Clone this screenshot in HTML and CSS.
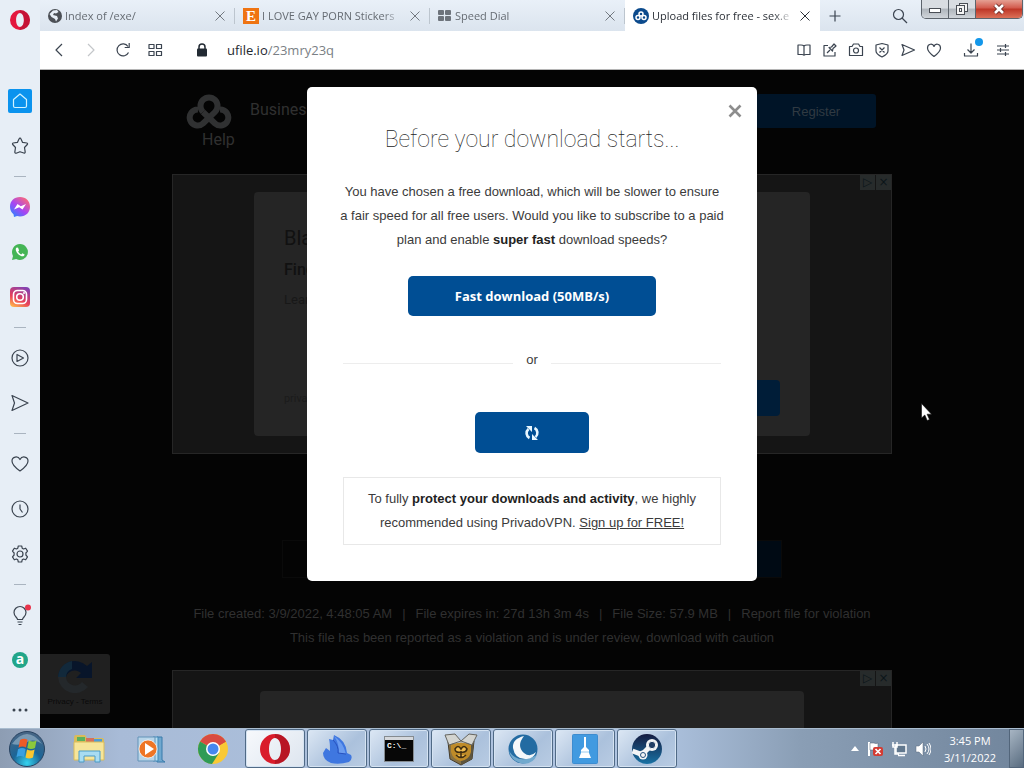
FILE: index.html
```html
<!DOCTYPE html>
<html lang="en">
<head>
    <meta charset="utf-8">
    <title>Upload files for free - sex.exe</title>
    <link rel="stylesheet" href="styles.css">
</head>
<body>
    <div class="browser">
        <nav class="sidebar">
            <button class="opera-menu" aria-label="Menu">
                <svg width="20" height="20" viewBox="0 0 20 20"><path fill="#e3173e" fill-rule="evenodd" d="M10 0a10 10 0 1 0 0 20a10 10 0 0 0 0-20zM10 3c2.300 0 3.900 3 3.900 7s-1.600 7-3.900 7s-3.900-3-3.900-7s1.600-7 3.900-7z"/><path fill="#a70e2c" fill-rule="evenodd" d="M10 0a10 10 0 0 1 0 20v-3c2.300 0 3.900-3 3.900-7s-1.600-7-3.900-7z" opacity=".5"/></svg>
            </button>
            <button class="side-item" aria-label="Start page"><span class="home"><svg class="line" width="18" height="18" viewBox="0 0 18 18"><path d="M2.500 7.500 9 2l6.500 5.500V14q0 1.500-1.500 1.500H4q-1.500 0-1.500-1.500z"/></svg></span></button>
            <button class="side-item" aria-label="Bookmarks"><svg class="line" width="18" height="18" viewBox="0 0 18 18"><path d="M9 1.200q.8 0 1 .7l1.600 3.500 4.300.6q1.100.4.400 1.500l-2.800 3 .7 4.600q-.2 1.300-1.400.9L9 14.700l-3.800 1.500q-1.200.2-1.400-1.100l.7-4.600-2.800-3Q1.100 6.400 2.100 6l4.300-.6L8 1.900q.3-.7 1-.7z"/></svg></button>
            <span class="side-sep"></span>
            <button class="side-item" aria-label="Messenger">
                <svg width="20" height="20" viewBox="0 0 20 20"><defs><linearGradient id="ms" x1="0" y1="1" x2=".8" y2="0"><stop offset="0" stop-color="#1590ff"/><stop offset=".5" stop-color="#a545f5"/><stop offset="1" stop-color="#ff6b72"/></linearGradient></defs><path fill="url(#ms)" d="M10 0c6 0 10 4.200 10 9.700s-4 9.700-10 9.700c-1 0-2-.1-2.900-.4L4 20l-.5-2.800C1.300 15.400 0 12.800 0 9.700 0 4.200 4 0 10 0z"/><path fill="#fff" d="M4 12.500 7.500 7l3.300 2.300L16 7l-3.500 5.500-3.300-2.300z"/></svg>
            </button>
            <button class="side-item" aria-label="WhatsApp">
                <svg width="18" height="18" viewBox="0 0 18 18"><path fill="#45b556" d="M9 1a8 8 0 1 1-3.800 15.100L1 17l1-4.100A8 8 0 0 1 9 1z"/><path fill="#fff" d="M6 4.500c-1.300.6-1.500 2-.9 3.500 1 2.500 3 4.500 5.500 5.200 1.500.4 2.900-.2 3-1.700l-2.200-1.200-1.100 1.200c-1.500-.6-2.500-1.600-3.100-3l.9-1.100-1-2.600z"/></svg>
            </button>
            <button class="side-item" aria-label="Instagram">
                <svg width="20" height="20" viewBox="0 0 20 20"><defs><linearGradient id="ig" x1=".2" y1="1" x2=".7" y2="0"><stop offset="0" stop-color="#ffb24c"/><stop offset=".4" stop-color="#e8405a"/><stop offset="1" stop-color="#8441b0"/></linearGradient></defs><rect width="20" height="20" rx="4" fill="url(#ig)"/><g fill="none" stroke="#fff" stroke-width="1.600"><rect x="3.500" y="3.500" width="13" height="13" rx="4"/><circle cx="10" cy="10" r="3.300"/></g><circle cx="14" cy="6" r="1" fill="#fff"/></svg>
            </button>
            <span class="side-sep"></span>
            <button class="side-item" aria-label="Player"><svg class="line" width="18" height="18" viewBox="0 0 18 18"><circle cx="9" cy="9" r="8"/><path d="M6 5.500v7L12.500 9z"/></svg></button>
            <button class="side-item" aria-label="My Flow"><svg class="line" width="18" height="18" viewBox="0 0 18 18"><path d="M1 1.500 17 9 1 16.500 3.500 9z"/></svg></button>
            <span class="side-sep"></span>
            <button class="side-item" aria-label="Likes"><svg class="line" width="18" height="18" viewBox="0 0 18 18"><path d="M9 16C4 12.500 1 9.500 1 6c0-4.500 6-5.500 8-1.500C11 .5 17 1.500 17 6c0 3.500-3 6.500-8 10z"/></svg></button>
            <button class="side-item" aria-label="History"><svg class="line" width="18" height="18" viewBox="0 0 18 18"><circle cx="9" cy="9" r="8"/><path d="M9 4.500V9l2.500 3.500"/></svg></button>
            <button class="side-item" aria-label="Settings"><svg class="line" width="18" height="18" viewBox="0 0 18 18"><circle cx="9" cy="9" r="3"/><path d="M7.300 1h3.400l.5 2.200 1.300.8 2.200-.8 1.800 2.900L14.900 8v2l1.600 1.900-1.800 2.900-2.200-.8-1.300.8-.5 2.200H7.300l-.5-2.200-1.300-.8-2.200.8-1.800-2.900L3.100 10V8L1.500 6.100l1.800-2.900 2.200.8 1.300-.8z"/></svg></button>
            <span class="side-sep"></span>
            <button class="side-item" aria-label="Tips"><svg class="line" width="22" height="22" viewBox="0 0 22 22"><path d="M8.500 15.500c0-2-3.500-3-3.500-7a6 6 0 0 1 12 0c0 4-3.500 5-3.500 7zM8.500 18h5M9.500 20.500h3"/><circle class="alert" cx="19" cy="3.500" r="3"/></svg></button>
            <button class="side-item" aria-label="Aliexpress"><span class="letter-icon">a</span></button>
            <button class="side-more" aria-label="More"><svg width="18" height="6" viewBox="0 0 18 6"><g fill="#3b4450"><circle cx="3" cy="3" r="1.500"/><circle cx="9" cy="3" r="1.500"/><circle cx="15" cy="3" r="1.500"/></g></svg></button>
        </nav>

        <div class="window">
            <div class="tabs">
                <div class="tab">
                    <svg width="14" height="14" viewBox="0 0 14 14"><circle cx="7" cy="7" r="7" fill="#4b4f55"/><path fill="#e6edf5" d="M5 1.500 9 1l1.500 2L8 4.500 6 4l-1 2 4 1 1 2.500L8 12.500 7 10 3.500 8 1.500 5z"/></svg>
                    <span class="tab-title">Index of /exe/</span>
                    <button class="tab-close" aria-label="Close tab"><svg width="10" height="10" viewBox="0 0 10 10"><path d="m.5.5 9 9m0-9-9 9"/></svg></button>
                </div>
                <div class="tab">
                    <span class="etsy">E</span>
                    <span class="tab-title">I LOVE GAY PORN Stickers</span>
                    <button class="tab-close" aria-label="Close tab"><svg width="10" height="10" viewBox="0 0 10 10"><path d="m.5.5 9 9m0-9-9 9"/></svg></button>
                </div>
                <div class="tab">
                    <svg width="14" height="14" viewBox="0 0 14 14"><g fill="#6d737b"><rect y="1" width="6" height="5" rx="1"/><rect x="7" y="1" width="6" height="5" rx="1"/><rect y="7" width="6" height="5" rx="1"/><rect x="7" y="7" width="6" height="5" rx="1"/></g></svg>
                    <span class="tab-title">Speed Dial</span>
                    <button class="tab-close" aria-label="Close tab"><svg width="10" height="10" viewBox="0 0 10 10"><path d="m.5.5 9 9m0-9-9 9"/></svg></button>
                </div>
                <div class="tab active">
                    <svg width="16" height="16" viewBox="0 0 16 16"><circle cx="8" cy="8" r="8" fill="#0b4a8c"/><g fill="none" stroke="#fff" stroke-width="1.500"><circle cx="8" cy="6" r="2"/><circle cx="5" cy="9.500" r="2"/><circle cx="11" cy="9.500" r="2"/></g></svg>
                    <span class="tab-title">Upload files for free - sex.e</span>
                    <button class="tab-close" aria-label="Close tab"><svg width="10" height="10" viewBox="0 0 10 10"><path d="m.5.5 9 9m0-9-9 9"/></svg></button>
                </div>
                <button class="new-tab" aria-label="New tab"><svg class="line" width="12" height="12" viewBox="0 0 12 12"><path d="M6 .5v11M.5 6h11"/></svg></button>
                <button class="tab-search" aria-label="Search tabs"><svg class="line" width="16" height="16" viewBox="0 0 16 16"><circle cx="6.500" cy="6.500" r="5"/><path d="m10 10 5 5"/></svg></button>
                <div class="win-buttons">
                    <button class="win-btn" aria-label="Minimize"><svg width="14" height="14" viewBox="0 0 14 14"><rect x="1.500" y="6.500" width="11" height="4" fill="#fff" stroke="#4a4e55"/></svg></button>
                    <button class="win-btn" aria-label="Restore"><svg width="14" height="14" viewBox="0 0 14 14"><g fill="#f4f4f4" stroke="#4a4e55"><rect x="4.500" y="1.500" width="8" height="8"/><rect x="1.500" y="3.500" width="8" height="9"/><rect x="4.500" y="6.500" width="2" height="3"/></g></svg></button>
                    <button class="win-btn close" aria-label="Close"><svg width="14" height="14" viewBox="0 0 14 14"><path d="m3 3 8 8m0-8-8 8" stroke="#6b2a25" stroke-width="4.500"/><path d="m3 3 8 8m0-8-8 8" stroke="#fff" stroke-width="2.600"/></svg></button>
                </div>
            </div>

            <div class="toolbar">
                <button aria-label="Back"><svg class="line" width="18" height="18" viewBox="0 0 18 18"><path d="M12 3 6 9l6 6"/></svg></button>
                <button class="disabled" aria-label="Forward"><svg class="line" width="18" height="18" viewBox="0 0 18 18"><path d="m6 3 6 6-6 6"/></svg></button>
                <button aria-label="Reload"><svg class="line" width="18" height="18" viewBox="0 0 18 18"><path d="M14.500 11.500A6 6 0 1 1 14 5.500M15.200 2v4.500h-4.500"/></svg></button>
                <button aria-label="Speed Dial"><svg class="line" width="18" height="18" viewBox="0 0 18 18"><rect x="3" y="3.500" width="5" height="4"/><rect x="10.500" y="3.500" width="5" height="4"/><rect x="3" y="10.500" width="5" height="4"/><rect x="10.500" y="10.500" width="5" height="4"/></svg></button>
                <svg class="lock" width="12" height="14" viewBox="0 0 12 14"><path d="M3 6V4a3 3 0 0 1 6 0v2" fill="none" stroke="#222a33" stroke-width="1.500"/><rect x="1" y="5.500" width="10" height="8" rx="1" fill="#222a33"/></svg>
                <div class="address"><span class="host">ufile.io</span>/23mry23q</div>
                <div class="actions">
                    <button aria-label="Reader"><svg class="line" width="16" height="16" viewBox="0 0 16 16"><path d="M8 4v9M8 4Q7 3 5 3H2v9.500h4q1.500 0 2 .8.500-.8 2-.8h4V3h-3q-2 0-3 1z"/></svg></button>
                    <button aria-label="Edit"><svg class="line" width="16" height="16" viewBox="0 0 16 16"><path d="M6 3.500H2V14h11v-4M5 11l3-3M7 5.500 10.500 9l.5-2.500 3-2.500-2-2-2.500 3z"/></svg></button>
                    <button aria-label="Snapshot"><svg class="line" width="16" height="16" viewBox="0 0 16 16"><path d="M1.500 4.500H4L5.500 2h5L12 4.500h2.500v9h-13z"/><circle cx="8" cy="8.500" r="2.500"/></svg></button>
                    <button aria-label="Blocker"><svg class="line" width="16" height="16" viewBox="0 0 16 16"><path d="M8 1.500 14 3v6q0 3-6 6-6-3-6-6V3zM5.500 5.500l5 5m0-5-5 5"/></svg></button>
                    <button aria-label="Send"><svg class="line" width="16" height="16" viewBox="0 0 16 16"><path d="M2 2.500 14.500 8 2 13.500 4 8z"/></svg></button>
                    <button aria-label="Save"><svg class="line" width="16" height="16" viewBox="0 0 16 16"><path d="M8 14.500C4 11.500 1.500 9 1.500 6 1.500 1.500 7 1 8 4.500 9 1 14.500 1.500 14.500 6c0 3-2.500 5.500-6.500 8.500z"/></svg></button>
                </div>
                <button class="downloads" aria-label="Downloads"><svg class="line" width="16" height="16" viewBox="0 0 16 16"><path d="M8 1.500V11M4.500 7.500 8 11l3.500-3.500M1.500 11v3h13v-3"/></svg></button>
                <button aria-label="Easy setup"><svg class="line" width="16" height="16" viewBox="0 0 16 16"><path d="M2 4h12M2 8h12M2 12h12M10.500 2v4M5.500 6v4M10.500 10v4"/></svg></button>
            </div>

            <div class="page">
                <div class="site">
                    <header class="site-header">
                        <div>
                            <div class="site-nav">
                                <svg width="46" height="36" viewBox="0 0 46 36"><g fill="none" stroke="#303132" stroke-width="6"><path d="M17 18A8.500 8.500 0 1 1 29 18L17 29.500A8 8 0 1 1 12 15.500"/><path d="M17 18 29 29.500A8 8 0 1 0 34 15.500"/></g></svg>
                                <a href="#">Business</a>
                            </div>
                            <a class="help" href="#">Help</a>
                        </div>
                        <button class="register">Register</button>
                    </header>
                    <section class="ad">
                        <span class="ad-marks"><i>▷</i><i>×</i></span>
                        <div class="ad-card">
                            <h2>Black</h2>
                            <h3>Find out</h3>
                            <p>Learn more</p>
                            <div class="ad-foot"><small>privado</small><button class="ad-button" aria-label="Open ad"></button></div>
                        </div>
                    </section>
                    <div class="file-row"><button class="file-button" aria-label="Download"></button></div>
                    <div class="file-info">
                        <p><span>File created: 3/9/2022, 4:48:05 AM</span><span>|</span><span>File expires in: 27d 13h 3m 4s</span><span>|</span><span>File Size: 57.9 MB</span><span>|</span><a href="#">Report file for violation</a></p>
                        <p>This file has been reported as a violation and is under review, download with caution</p>
                    </div>
                    <section class="ad">
                        <span class="ad-marks"><i>▷</i><i>×</i></span>
                        <div class="ad-card second"></div>
                    </section>
                </div>

                <div class="recaptcha">
                    <svg width="42" height="40" viewBox="0 0 42 40"><path d="M4 20A17 17 0 0 1 33 9l5-4v16H22l5-5a9 9 0 0 0-15 4z" fill="#08152a"/><path d="M4 20a17 17 0 0 0 30 10l-6-5a9 9 0 0 1-16-5z" fill="#24282b"/><path d="M4 20A17 17 0 0 1 18 4v8a9 9 0 0 0-6 8z" fill="#12293b"/></svg>
                    <small>Privacy - Terms</small>
                </div>

                <div class="overlay">
                    <div class="modal" role="dialog" aria-labelledby="modal-title">
                        <button class="modal-close" aria-label="Close"><svg width="14" height="14" viewBox="0 0 14 14"><path d="m1.500 1.500 11 11m0-11-11 11"/></svg></button>
                        <h1 id="modal-title">Before your download starts...</h1>
                        <p>You have chosen a free download, which will be slower to ensure<br>a fair speed for all free users. Would you like to subscribe to a paid<br>plan and enable <b>super fast</b> download speeds?</p>
                        <button class="primary fast">Fast download (50MB/s)</button>
                        <div class="or">or</div>
                        <button class="primary slow" aria-label="Loading"><svg width="16" height="16" viewBox="0 0 16 16"><g fill="none" stroke="#e8f7ff" stroke-width="2.600"><path d="M5.500 13A5.500 5.500 0 0 1 4.500 4"/><path d="M10.500 3a5.500 5.500 0 0 1 1 9"/></g><path fill="#e8f7ff" d="M2 1h6v6zM14 15H8V9z"/></svg></button>
                        <div class="vpn">To fully <b>protect your downloads and activity</b>, we highly<br>recommended using PrivadoVPN. <a href="#">Sign up for FREE!</a></div>
                    </div>
                </div>
                <svg class="cursor" width="12" height="19" viewBox="0 0 12 19"><path d="M.5.500v14.500l3.300-3 2.400 5.500 2.300-1-2.400-5.300h4.400z" fill="#fff" stroke="#111" stroke-width=".6"/></svg>
            </div>
        </div>
    </div>

    <footer class="taskbar">
        <button class="start" aria-label="Start">
            <svg width="38" height="38" viewBox="0 0 38 38"><defs><radialGradient id="orb" cx=".5" cy=".9" r=".9"><stop offset="0" stop-color="#35d3ef"/><stop offset=".45" stop-color="#1c6597"/><stop offset="1" stop-color="#4a6684"/></radialGradient></defs><circle cx="19" cy="19" r="17.500" fill="url(#orb)" stroke="#274260"/><path d="M4 14Q19-6 34 14 26 8 19 12 12 16 4 14z" fill="#b6cbdc" opacity=".5"/><path fill="#ed5b27" d="m12 10q4-2.500 7.500-.3L18 17.500q-4-2-7.500.300z"/><path fill="#8cc83c" d="M20.800 10.400q4 2.200 7.700 0L27 18q-4 2-7.700 0z"/><path fill="#3aa0e2" d="M10 19.300q4-2.300 7.600-.2L16 27q-4-2.200-7.500.2z"/><path fill="#fbc62f" d="M19 19.600q4 2 7.600 0L25 27.500q-4 2.200-7.500 0z"/></svg>
        </button>
        <button class="task" aria-label="Explorer">
            <svg width="34" height="32" viewBox="0 0 34 32"><path d="M2 5q0-3 2-3h9l2 3h15q2 0 2 2v20H2z" fill="#d9bb59"/><path d="M5 4h8v4H5z" fill="#5ab15e"/><path d="M14 5h8v4h-8z" fill="#d4705b"/><path d="M22 6h8v4h-8z" fill="#4d9bd8"/><path d="M2 9h30v18H2z" fill="#f6e59a" stroke="#d9bc5b"/><path d="M7 29V18h21v11h-5v-6H12v6z" fill="#a8dcf2" stroke="#4b9bc6"/></svg>
        </button>
        <button class="task" aria-label="Media Player">
            <svg width="32" height="30" viewBox="0 0 32 30"><path d="M22 3h5v23l3 2h-8z" fill="#70a8cf" stroke="#397aaa"/><path d="M18 3h5v24h-5z" fill="#b9dff2" stroke="#4189b8"/><path d="M3 3h17v24H3z" fill="#b8d5e9" stroke="#6293b8"/><circle cx="13" cy="15" r="9" fill="#ee7525" stroke="#fff" stroke-width=".7"/><path d="m10 9 9 6-9 6z" fill="#fff"/></svg>
        </button>
        <button class="task" aria-label="Chrome">
            <svg width="32" height="32" viewBox="0 0 32 32"><circle cx="16" cy="16" r="15" fill="#f9c935"/><path fill="#d94b41" d="M16 16 3 8.500a15 15 0 0 1 26 0z"/><path fill="#d94b41" d="M16 8.500h13L16 16z"/><path fill="#2f9b55" d="M3 8.500 16 16l6 4-7 11A15 15 0 0 1 3 8.500z"/><circle cx="16" cy="16" r="7" fill="#fff"/><circle cx="16" cy="16" r="5.500" fill="#4688ef"/></svg>
        </button>
        <button class="task open current" aria-label="Opera">
            <svg width="32" height="32" viewBox="0 0 32 32"><path fill="#d91c2b" fill-rule="evenodd" d="M16 1a15 15 0 1 0 0 30a15 15 0 0 0 0-30zM16 5c4 0 6 5 6 11s-2 11-6 11-6-5-6-11 2-11 6-11z"/><path fill="#970f1d" opacity=".5" d="M16 1a15 15 0 0 1 0 30v-4c4 0 6-5 6-11s-2-11-6-11z"/></svg>
        </button>
        <button class="task open" aria-label="Wireshark">
            <svg width="32" height="32" viewBox="0 0 32 32"><path d="M2 20 5 15l4 3Q9 9 8 6l4 1 1-5q12 5 13 18l4 2q2 4-2 7-10 3-18 1Q2 27 2 20z" fill="#3f77e0"/><path d="M13 3q9 6 12 18l-7-1Q18 10 13 3z" fill="#6b9cf0"/><path d="M12 7q6 6 5 13l8 1" fill="none" stroke="#2852bf"/></svg>
        </button>
        <button class="task open" aria-label="Command Prompt">
            <svg width="32" height="28" viewBox="0 0 32 28"><rect x="1.500" y="1.500" width="29" height="25" fill="#070707" stroke="#858b90"/><path d="M2 2h28v3H2z" fill="#d5d8dc"/><text class="cmd" x="4" y="13">C:\_</text></svg>
        </button>
        <button class="task open" aria-label="Package">
            <svg width="34" height="34" viewBox="0 0 34 34"><path d="M4 10 17 14 30 9 28 27 17 33 6 27z" fill="#887243" stroke="#443b2c"/><path d="M17 14 30 9 28 27 17 33z" fill="#5d553f"/><path d="M7 13q10-5 20 0v7q-2 8-10 9-8-1-10-9z" fill="#bf8b28"/><path d="m1 3 10-1 6 7-12 4zM17 9l8-7 8 1-5 10z" fill="#d3d4d0" stroke="#65645e"/><path d="M11 17q3-5 6 0 3-5 6 0-1 4-6 3-6 1-6-3zM17 19v7m-5-3q5 5 10 0" fill="#f0bd50" stroke="#3e2d12" stroke-width="1.500"/></svg>
        </button>
        <button class="task open" aria-label="Moon">
            <svg width="32" height="32" viewBox="0 0 32 32"><circle cx="16" cy="16" r="14.500" fill="#236ba2"/><path d="M2 18q9 14 28 4-5 11-17 8Q4 27 2 18z" fill="#71a9ce"/><path d="M17 3Q5 6 6 15q2 12 14 11 7-1 9-7-6 6-12 1Q9 13 17 3z" fill="#f4f7fa"/></svg>
        </button>
        <button class="task open" aria-label="Cleaner">
            <svg width="26" height="30" viewBox="0 0 26 30"><rect x=".5" y=".5" width="25" height="29" rx="1" fill="#419ae0" stroke="#3c8cd0"/><path d="M12 3h2v10l3 3v3l2 5H7l2-5v-3l3-3z" fill="#fff"/><path d="M9 18h8" stroke="#9acbef"/></svg>
        </button>
        <button class="task open" aria-label="Steam">
            <svg width="32" height="32" viewBox="0 0 32 32"><defs><linearGradient id="st" x1="0" y1="0" x2="0" y2="1"><stop offset="0" stop-color="#151b40"/><stop offset="1" stop-color="#1972a4"/></linearGradient></defs><circle cx="16" cy="16" r="15" fill="url(#st)"/><path d="M1.500 18 11 21.500l8-8" fill="none" stroke="#f4f5f6" stroke-width="5"/><circle cx="21" cy="12" r="6" fill="#f4f5f6"/><circle cx="21" cy="12" r="3.700" fill="#234066" stroke="#f4f5f6"/><circle cx="12" cy="22" r="4.500" fill="#f4f5f6"/><circle cx="12" cy="22" r="2.500" fill="none" stroke="#27527e"/></svg>
        </button>
        <div class="tray">
            <svg width="8" height="5" viewBox="0 0 8 5"><path d="m4 0 4 5H0z" fill="#fff"/></svg>
            <svg width="16" height="16" viewBox="0 0 16 16"><path d="M2 1v14" stroke="#fff" stroke-width="2"/><path d="M3 2h4q2 1 4 0v7H3z" fill="#fff" stroke="#4f5f71" stroke-width=".5"/><rect x="6" y="6" width="10" height="9" rx="2" fill="#d43b32"/><path d="m8.500 8 5 5m0-5-5 5" stroke="#fff" stroke-width="1.700"/></svg>
            <svg width="16" height="16" viewBox="0 0 16 16"><rect x="5" y="4" width="10" height="8" fill="#62788e" stroke="#fff" stroke-width="1.500"/><path d="M7 14.500h7M2 1v5h4V1M1 4h6M4 6v7h4" fill="none" stroke="#fff" stroke-width="1.500"/></svg>
            <svg width="16" height="16" viewBox="0 0 16 16"><path d="M1 5h3l4-4v14l-4-4H1z" fill="#fff" stroke="#596b7e" stroke-width=".5"/><path d="M10 5q2 3 0 6m2-8q4 5 0 10m2-11q4 6 0 12" fill="none" stroke="#fff"/></svg>
        </div>
        <div class="clock"><span>3:45 PM</span><span>3/11/2022</span></div>
        <button class="show-desktop" aria-label="Show desktop"></button>
    </footer>
</body>
</html>
```

FILE: styles.css
```css
* {
    box-sizing: border-box;
}

body {
    display: flex;
    flex-direction: column;
    height: 100vh;
    margin: 0;
    overflow: hidden;
    font-family: "Liberation Sans", Arial, sans-serif;
    font-size: 13px;
    color: #333;
}

button {
    display: flex;
    align-items: center;
    justify-content: center;
    flex-shrink: 0;
    padding: 0;
    border: 0;
    background: none;
    font-family: inherit;
}

svg {
    flex-shrink: 0;
}

h1, h2, h3, p {
    margin: 0;
}

.line {
    fill: none;
    stroke: #3b4450;
    stroke-width: 1.2;
    stroke-linejoin: round;
}

.browser {
    display: flex;
    flex: 1;
    min-height: 0;
}

/* sidebar */
.sidebar {
    display: flex;
    flex-direction: column;
    align-items: center;
    flex-shrink: 0;
    width: 40px;
    background: #e7eef6;
}

.opera-menu {
    width: 40px;
    height: 40px;
    margin-bottom: 38px;
}

.side-item {
    width: 40px;
    height: 45px;
}

.side-more {
    width: 40px;
    height: 36px;
    margin-top: auto;
}

.side-sep {
    display: flex;
    align-items: center;
    flex-shrink: 0;
    width: 12px;
    height: 16px;
}

.side-sep::before {
    content: "";
    width: 12px;
    height: 1px;
    background: #aab4c0;
}

.home {
    display: flex;
    align-items: center;
    justify-content: center;
    width: 24px;
    height: 24px;
    border-radius: 2px;
    background: #0b93ee;
}

.home .line {
    stroke: #d3f3ff;
}

.line .alert {
    fill: #e8344c;
    stroke: none;
}

.letter-icon {
    width: 16px;
    height: 16px;
    border-radius: 8px;
    background: #22a589;
    color: #fff;
    font: bold 14px/14px "Open Sans", sans-serif;
}

/* tabs */
.window {
    display: flex;
    flex-direction: column;
    flex: 1;
    min-width: 0;
}

.tabs {
    display: flex;
    height: 31px;
    background: linear-gradient(#e9f0f8, #dbe4ee);
    font: 11px/16px "Open Sans", sans-serif;
    color: #666c73;
}

.tab {
    display: flex;
    align-items: center;
    gap: 3px;
    flex: 0 1 195px;
    min-width: 0;
    padding: 0 10px 0 8px;
    background: linear-gradient(#bcc5ce, #bcc5ce) right center / 1px 16px no-repeat;
}

.tab.active {
    background: #fff;
    color: #2c3138;
}

.tab-title {
    flex: 1;
    overflow: hidden;
    white-space: nowrap;
    -webkit-mask-image: linear-gradient(to left, transparent, #000 20px);
    mask-image: linear-gradient(to left, transparent, #000 20px);
}

.tab-close {
    width: 10px;
    height: 16px;
    margin-left: 4px;
}

.tab-close svg {
    fill: none;
    stroke: #737980;
}

.active .tab-close svg {
    stroke: #2c3138;
}

.etsy {
    flex-shrink: 0;
    width: 16px;
    height: 16px;
    background: #ef7412;
    color: #fff;
    font: bold 15px/16px "Liberation Serif", serif;
    text-align: center;
}

.new-tab {
    width: 30px;
}

.tab-search {
    width: 26px;
    margin-left: auto;
}

.win-buttons {
    display: flex;
    height: 19px;
    margin: 0 1px 0 8px;
    border: 1px solid #5d646c;
    border-top: 0;
    border-radius: 0 0 5px 5px;
    overflow: hidden;
}

.win-btn {
    width: 27px;
    border-right: 1px solid #5d646c;
    background: linear-gradient(#d9dde2 45%, #afb5bc 50%, #d0d5da);
}

.win-btn.close {
    width: 46px;
    border-right: 0;
    background: linear-gradient(#e5a093, #d2594b 45%, #bd3626 50%, #dc7058);
}

/* address bar */
.toolbar {
    display: flex;
    align-items: center;
    height: 39px;
    padding: 0 5px 0 3px;
    border-bottom: 1px solid #b5b5b5;
    background: #fff;
}

.toolbar button {
    width: 32px;
    height: 32px;
}

.toolbar .disabled {
    opacity: .3;
}

.lock {
    margin: 0 19px 0 25px;
}

.address {
    flex: 1;
    font: 13px/20px "Open Sans", sans-serif;
    color: #7a7f85;
}

.host {
    color: #23282e;
}

.actions {
    display: flex;
}

.toolbar .actions button {
    width: 26px;
}

.toolbar .downloads {
    position: relative;
    margin-left: 8px;
}

.downloads::after {
    content: "";
    position: absolute;
    top: 4px;
    right: 4px;
    width: 8px;
    height: 8px;
    border-radius: 4px;
    background: #1397ea;
}

/* page behind the modal */
.page {
    position: relative;
    flex: 1;
    min-height: 0;
    overflow: hidden;
    background: #040404;
    color: #303030;
}

.page a {
    color: inherit;
    text-decoration: none;
}

.site {
    max-width: 720px;
    margin: 0 auto;
}

.site-header {
    display: flex;
    align-items: flex-start;
    justify-content: space-between;
    height: 104px;
    padding: 24px 16px 0 14px;
    font: 16px/20px Roboto, sans-serif;
}

.site-nav {
    display: flex;
    gap: 18px;
    line-height: 32px;
}

.help {
    margin-left: 16px;
}

.register {
    width: 120px;
    height: 34px;
    border-radius: 3px;
    background: #001427;
    color: #303a42;
    font: 13px "Liberation Sans", sans-serif;
}

.ad {
    position: relative;
    height: 280px;
    padding: 17px 81px;
    border: 1px solid #262626;
    background: #151515;
}

.ad-marks {
    position: absolute;
    top: 0;
    right: 0;
    display: flex;
    gap: 1px;
    font: 12px/15px "DejaVu Sans", sans-serif;
    color: #0b1519;
}

.ad-marks i {
    width: 15px;
    height: 15px;
    background: #272b2b;
    font-style: normal;
    text-align: center;
}

.ad-card {
    display: flex;
    flex-direction: column;
    height: 244px;
    padding: 32px 30px 20px;
    border-radius: 4px;
    background: #252525;
    color: #111;
    font-family: Roboto, sans-serif;
}

.ad-card.second {
    margin: 3px 6px 0;
}

.ad-card h2 {
    font-size: 20px;
    font-weight: 400;
    line-height: 28px;
}

.ad-card h3 {
    font-size: 16px;
    font-weight: 500;
    line-height: 36px;
}

.ad-card p {
    color: #181818;
    line-height: 24px;
}

.ad-foot {
    display: flex;
    align-items: center;
    justify-content: space-between;
    margin-top: auto;
    color: #1b1b1b;
}

.ad-button {
    width: 120px;
    height: 36px;
    border-radius: 4px;
    background: #001d38;
}

.file-row {
    display: flex;
    justify-content: flex-end;
    width: 500px;
    height: 38px;
    margin: 86px auto 0;
    border: 1px solid #0a0a0a;
}

.file-button {
    width: 100px;
    background: #000a14;
}

.file-info {
    padding: 24px 0 20px;
    line-height: 24px;
    text-align: center;
}

.file-info p:first-child {
    display: flex;
    justify-content: center;
    gap: 10px;
}

.recaptcha {
    position: absolute;
    left: 0;
    bottom: 14px;
    display: flex;
    flex-direction: column;
    align-items: center;
    width: 70px;
    height: 60px;
    padding-top: 3px;
    border-radius: 0 3px 3px 0;
    background: #202020;
    color: #0a0a0a;
}

.recaptcha small {
    font-size: 8px;
}

/* modal */
.overlay {
    position: absolute;
    inset: 0;
    display: flex;
    align-items: flex-start;
    justify-content: center;
    padding-top: 17px;
}

.modal {
    position: relative;
    display: flex;
    flex-direction: column;
    align-items: center;
    width: 450px;
    padding: 37px 30px 36px;
    border-radius: 5px;
    background: #fff;
    color: #3b3b3b;
    line-height: 24px;
    text-align: center;
}

.modal b {
    color: #222;
}

.modal-close {
    position: absolute;
    top: 17px;
    right: 15px;
}

.modal-close svg {
    fill: none;
    stroke: #8d8d8d;
    stroke-width: 2.6;
}

.modal h1 {
    margin-bottom: 24px;
    font: 100 23px/32px Roboto, sans-serif;
    color: #222;
}

.primary {
    border-radius: 5px;
    background: #004e94;
    color: #fff;
}

.fast {
    width: 248px;
    height: 40px;
    margin-top: 24px;
    font: bold 13px "Open Sans", sans-serif;
}

.or {
    display: flex;
    align-items: center;
    gap: 13px;
    width: 100%;
    margin: 32px 0 40px;
    padding: 0 6px;
}

.or::before,
.or::after {
    content: "";
    flex: 1;
    height: 1px;
    margin-top: 6px;
    background: #ededed;
}

.slow {
    width: 114px;
    height: 41px;
}

.vpn {
    align-self: stretch;
    margin: 24px 6px 0;
    padding: 9px 0;
    border: 1px solid #e8e8e8;
}

.vpn a {
    text-decoration: underline;
}

.cursor {
    position: absolute;
    left: 881px;
    top: 333px;
}

/* taskbar */
.taskbar {
    display: flex;
    flex-shrink: 0;
    height: 40px;
    border-top: 1px solid #a9bccf;
    background: linear-gradient(to right, #8d9db3, #a8bbd7 120px, #b0c5e2 650px, #8a9eb5 800px, #71859c);
}

.start {
    width: 54px;
    margin-right: 5px;
}

.task {
    width: 60px;
    margin-right: 2px;
    border: 1px solid transparent;
    border-radius: 3px;
}

.task.open {
    border-color: #506a86;
    background: linear-gradient(135deg, #dce7f4, #abc1dc 60%, #b9cce3);
    box-shadow: inset 0 0 0 1px #d5e3f2;
}

.task.current {
    background: linear-gradient(135deg, #f7f9fc, #dde5ef);
}

.cmd {
    fill: #fff;
    font: bold 8px "Liberation Mono", monospace;
}

.tray {
    display: flex;
    align-items: center;
    gap: 8px;
    margin-left: auto;
}

.clock {
    display: flex;
    flex-direction: column;
    justify-content: center;
    width: 78px;
    color: #fff;
    font: 11px/17px "Open Sans", sans-serif;
    text-align: center;
}

.show-desktop {
    width: 15px;
    border: 1px solid #52657a;
    background: linear-gradient(135deg, #a7b5c3, #596c80);
}
```
